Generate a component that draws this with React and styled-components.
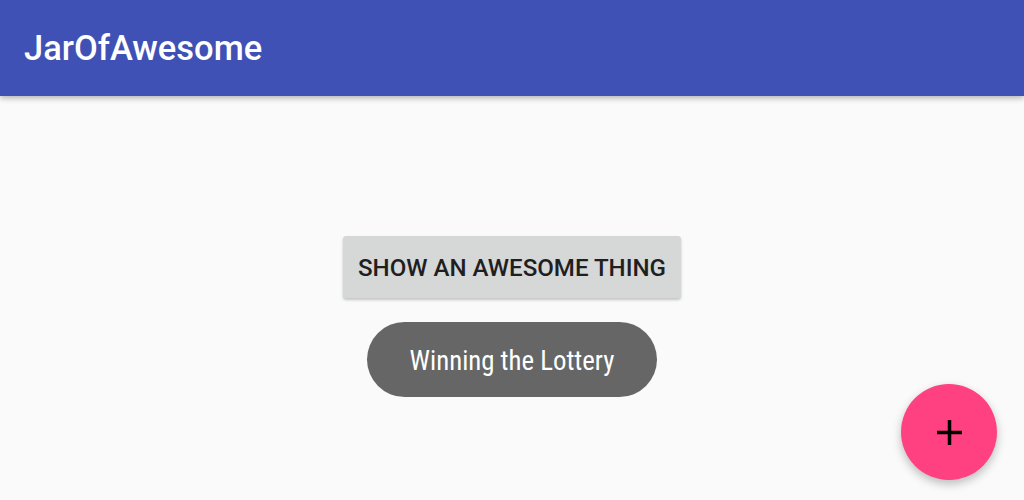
import React from 'react';
import styled, { createGlobalStyle } from 'styled-components';

const GlobalStyle = createGlobalStyle`
  html, body {
    margin: 0;
    padding: 0;
    background: #fafafa;
    font-family: Roboto, "Liberation Sans", sans-serif;
  }
`;

const Screen = styled.div`
  position: relative;
  width: 1024px;
  height: 500px;
  overflow: hidden;
  background: #fafafa;
`;

const AppBar = styled.header`
  height: 96px;
  background: #3f51b5;
  display: flex;
  align-items: center;
  padding-left: 24px;
  box-shadow: 0 2px 6px rgba(0, 0, 0, 0.3);
  position: relative;
  z-index: 1;
`;

const Title = styled.h1`
  margin: 0;
  color: #fff;
  font-size: 34.5px;
  font-weight: 500;
  letter-spacing: 0;
`;

const Content = styled.main`
  display: flex;
  flex-direction: column;
  align-items: center;
  padding-top: 140px;
  gap: 24px;
`;

const RaisedButton = styled.button`
  height: 62px;
  padding: 2px 15px 0;
  border: none;
  border-radius: 3px;
  background: #d6d7d7;
  color: #1f1f1f;
  font-family: Roboto, "Liberation Sans", sans-serif;
  font-size: 24.1px;
  font-weight: 500;
  text-transform: uppercase;
  box-shadow: 0 2px 3px rgba(0, 0, 0, 0.22);
  cursor: pointer;
`;

const Toast = styled.div`
  height: 75px;
  box-sizing: border-box;
  padding: 3px 43px 0;
  display: flex;
  align-items: center;
  border-radius: 38px;
  background: #666666;
  color: #fff;
  font-family: "Roboto Condensed", "Liberation Sans Narrow", Roboto, sans-serif;
  font-size: 26.8px;
`;

const Fab = styled.button`
  position: absolute;
  right: 27px;
  bottom: 20px;
  width: 96px;
  height: 96px;
  border: none;
  border-radius: 50%;
  background: #ff4081;
  display: flex;
  align-items: center;
  justify-content: center;
  box-shadow: 0 4px 10px rgba(0, 0, 0, 0.25);
  cursor: pointer;
`;

const PlusIcon = () => (
  <svg width="25" height="25" viewBox="0 0 25 25">
    <path d="M12.5 0v25M0 12.5h25" stroke="#000" strokeWidth="3.5" />
  </svg>
);

const App = () => (
  <>
    <GlobalStyle />
    <Screen>
      <AppBar>
        <Title>JarOfAwesome</Title>
      </AppBar>
      <Content>
        <RaisedButton>Show an awesome thing</RaisedButton>
        <Toast>Winning the Lottery</Toast>
      </Content>
      <Fab aria-label="Add">
        <PlusIcon />
      </Fab>
    </Screen>
  </>
);

export default App;
